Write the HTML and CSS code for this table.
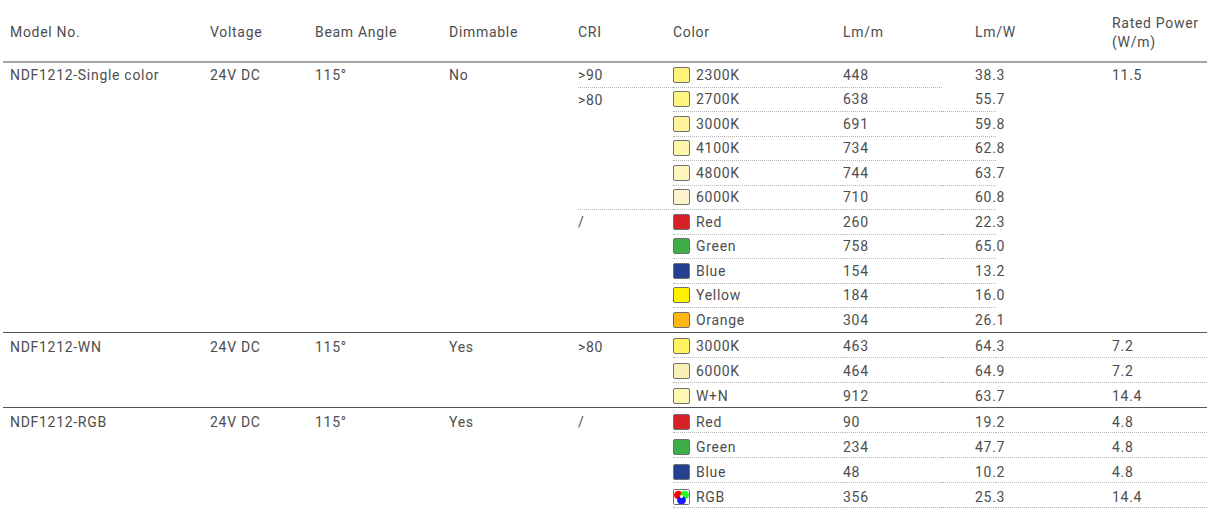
FILE: index.html
```html
<!DOCTYPE html>
<html>
<head>
<meta charset="utf-8">
<link rel="stylesheet" href="styles.css">
</head>
<body>
<div class="wrap">
<table class="spec">
  <colgroup>
    <col class="c-model"><col class="c-volt"><col class="c-beam"><col class="c-dim"><col class="c-cri"><col class="c-color"><col class="c-lmm"><col class="c-lmw"><col class="c-rated">
  </colgroup>
  <thead>
    <tr>
      <th class="p-model">Model No.</th>
      <th>Voltage</th>
      <th>Beam Angle</th>
      <th>Dimmable</th>
      <th class="p0">CRI</th>
      <th class="p0">Color</th>
      <th class="p0">Lm/m</th>
      <th class="p-lmw">Lm/W</th>
      <th class="p-rated">Rated Power<br>(W/m)</th>
    </tr>
  </thead>
  <tbody class="s1">
    <tr>
      <td class="p-model top" rowspan="11">NDF1212-Single color</td>
      <td class="top" rowspan="11">24V DC</td>
      <td class="top" rowspan="11">115°</td>
      <td class="top" rowspan="11">No</td>
      <td class="p0 dot">&gt;90</td>
      <td class="p0 dot"><span class="sw" style="background:#fff27a"></span>2300K</td>
      <td class="p0 dot">448</td>
      <td class="p-lmw">38.3</td>
      <td class="p-rated top" rowspan="11">11.5</td>
    </tr>
    <tr>
      <td class="p0 dot top" rowspan="5">&gt;80</td>
      <td class="p0 dot"><span class="sw" style="background:#fff482"></span>2700K</td>
      <td class="p0 dot">638</td>
      <td class="p-lmw dot">55.7</td>
    </tr>
    <tr>
      <td class="p0 dot"><span class="sw" style="background:#fff49c"></span>3000K</td>
      <td class="p0 dot">691</td>
      <td class="p-lmw dot">59.8</td>
    </tr>
    <tr>
      <td class="p0 dot"><span class="sw" style="background:#fff5ad"></span>4100K</td>
      <td class="p0 dot">734</td>
      <td class="p-lmw dot">62.8</td>
    </tr>
    <tr>
      <td class="p0 dot"><span class="sw" style="background:#fff6bd"></span>4800K</td>
      <td class="p0 dot">744</td>
      <td class="p-lmw dot">63.7</td>
    </tr>
    <tr>
      <td class="p0 dot"><span class="sw" style="background:#fdf4cc"></span>6000K</td>
      <td class="p0 dot">710</td>
      <td class="p-lmw dot">60.8</td>
    </tr>
    <tr>
      <td class="p0 top" rowspan="5">/</td>
      <td class="p0 dot"><span class="sw" style="background:#d42128"></span>Red</td>
      <td class="p0 dot">260</td>
      <td class="p-lmw dot">22.3</td>
    </tr>
    <tr>
      <td class="p0 dot"><span class="sw" style="background:#3fae49"></span>Green</td>
      <td class="p0 dot">758</td>
      <td class="p-lmw dot">65.0</td>
    </tr>
    <tr>
      <td class="p0 dot"><span class="sw" style="background:#243f8e"></span>Blue</td>
      <td class="p0 dot">154</td>
      <td class="p-lmw dot">13.2</td>
    </tr>
    <tr>
      <td class="p0 dot"><span class="sw" style="background:#fff200"></span>Yellow</td>
      <td class="p0 dot">184</td>
      <td class="p-lmw dot">16.0</td>
    </tr>
    <tr>
      <td class="p0"><span class="sw" style="background:#fdb515"></span>Orange</td>
      <td class="p0">304</td>
      <td class="p-lmw">26.1</td>
    </tr>
  </tbody>
  <tbody class="s2">
    <tr class="sec">
      <td class="p-model top" rowspan="3">NDF1212-WN</td>
      <td class="top" rowspan="3">24V DC</td>
      <td class="top" rowspan="3">115°</td>
      <td class="top" rowspan="3">Yes</td>
      <td class="p0 top" rowspan="3">&gt;80</td>
      <td class="p0 dot"><span class="sw" style="background:#fff35f"></span>3000K</td>
      <td class="p0 dot">463</td>
      <td class="p-lmw dot">64.3</td>
      <td class="p-rated dot">7.2</td>
    </tr>
    <tr>
      <td class="p0 dot"><span class="sw" style="background:#f9efb5"></span>6000K</td>
      <td class="p0 dot">464</td>
      <td class="p-lmw dot">64.9</td>
      <td class="p-rated dot">7.2</td>
    </tr>
    <tr>
      <td class="p0"><span class="sw" style="background:#fff6b3"></span>W+N</td>
      <td class="p0">912</td>
      <td class="p-lmw">63.7</td>
      <td class="p-rated">14.4</td>
    </tr>
  </tbody>
  <tbody class="s3">
    <tr class="sec">
      <td class="p-model top" rowspan="4">NDF1212-RGB</td>
      <td class="top" rowspan="4">24V DC</td>
      <td class="top" rowspan="4">115°</td>
      <td class="top" rowspan="4">Yes</td>
      <td class="p0 top" rowspan="4">/</td>
      <td class="p0 dot"><span class="sw" style="background:#d42128"></span>Red</td>
      <td class="p0 dot">90</td>
      <td class="p-lmw dot">19.2</td>
      <td class="p-rated dot">4.8</td>
    </tr>
    <tr>
      <td class="p0 dot"><span class="sw" style="background:#3fae49"></span>Green</td>
      <td class="p0 dot">234</td>
      <td class="p-lmw dot">47.7</td>
      <td class="p-rated dot">4.8</td>
    </tr>
    <tr>
      <td class="p0 dot"><span class="sw" style="background:#243f8e"></span>Blue</td>
      <td class="p0 dot">48</td>
      <td class="p-lmw dot">10.2</td>
      <td class="p-rated dot">4.8</td>
    </tr>
    <tr>
      <td class="p0 dot"><span class="sw sw-rgb"><svg width="15" height="14" viewBox="0 0 15 14"><rect width="15" height="14" fill="#fff"/><circle cx="4.3" cy="5" r="4.3" fill="#f00"/><circle cx="10.7" cy="5" r="4.3" fill="#0f0" fill-opacity="0.85"/><circle cx="7.5" cy="10.2" r="4.3" fill="#00f" fill-opacity="0.9"/><circle cx="7.5" cy="6.5" r="1.6" fill="#fff"/></svg></span>RGB</td>
      <td class="p0 dot">356</td>
      <td class="p-lmw dot">25.3</td>
      <td class="p-rated dot">14.4</td>
    </tr>
  </tbody>
</table>
</div>
</body>
</html>
```

FILE: styles.css
```css
html, body {
  margin: 0;
  padding: 0;
  background: #ffffff;
}

.wrap {
  padding-left: 3px;
}

.spec {
  border-collapse: collapse;
  table-layout: fixed;
  width: 1204px;
  font-family: Roboto, "Noto Sans", sans-serif;
  font-size: 14px;
  color: #4d4d4d;
  letter-spacing: 0.7px;
}

.c-model { width: 202px; }
.c-volt  { width: 105px; }
.c-beam  { width: 134px; }
.c-dim   { width: 134px; }
.c-cri   { width: 95px; }
.c-color { width: 170px; }
.c-lmm   { width: 99px; }
.c-lmw   { width: 54px; }
.c-rated { width: 211px; }

.spec th {
  font-weight: normal;
  text-align: left;
  height: 57px;
  padding: 4px 0 0 5px;
  line-height: 19px;
  vertical-align: middle;
  border-bottom: 2px solid #a4a4a4;
  white-space: nowrap;
}

.spec td {
  height: 23.5px;
  padding: 0 0 0 5px;
  line-height: 18px;
  vertical-align: middle;
  white-space: nowrap;
  overflow: visible;
}

.spec .s2 td {
  height: 21.8px;
  padding-top: 2.5px;
}

.spec .s3 td {
  height: 21.5px;
  padding-top: 2.5px;
}

.spec td.top {
  vertical-align: top;
  padding-top: 3px;
}

.spec .s2 td.top,
.spec .s3 td.top {
  padding-top: 5px;
}

.spec .p-model { padding-left: 7px; }
.spec .p0 { padding-left: 0; }
.spec .p-lmw { padding-left: 33px; }
.spec .p-rated { padding-left: 116px; }

.spec td.dot {
  border-bottom: 1px dotted #b5b5b5;
}

.spec tr.sec td {
  border-top: 1px solid #555555;
}

.sw {
  display: inline-block;
  width: 15px;
  height: 14px;
  border: 1px solid #707070;
  border-radius: 2px;
  vertical-align: -3px;
  margin-right: 6px;
  box-sizing: content-box;
  overflow: hidden;
}

.sw-rgb svg {
  display: block;
}
```
